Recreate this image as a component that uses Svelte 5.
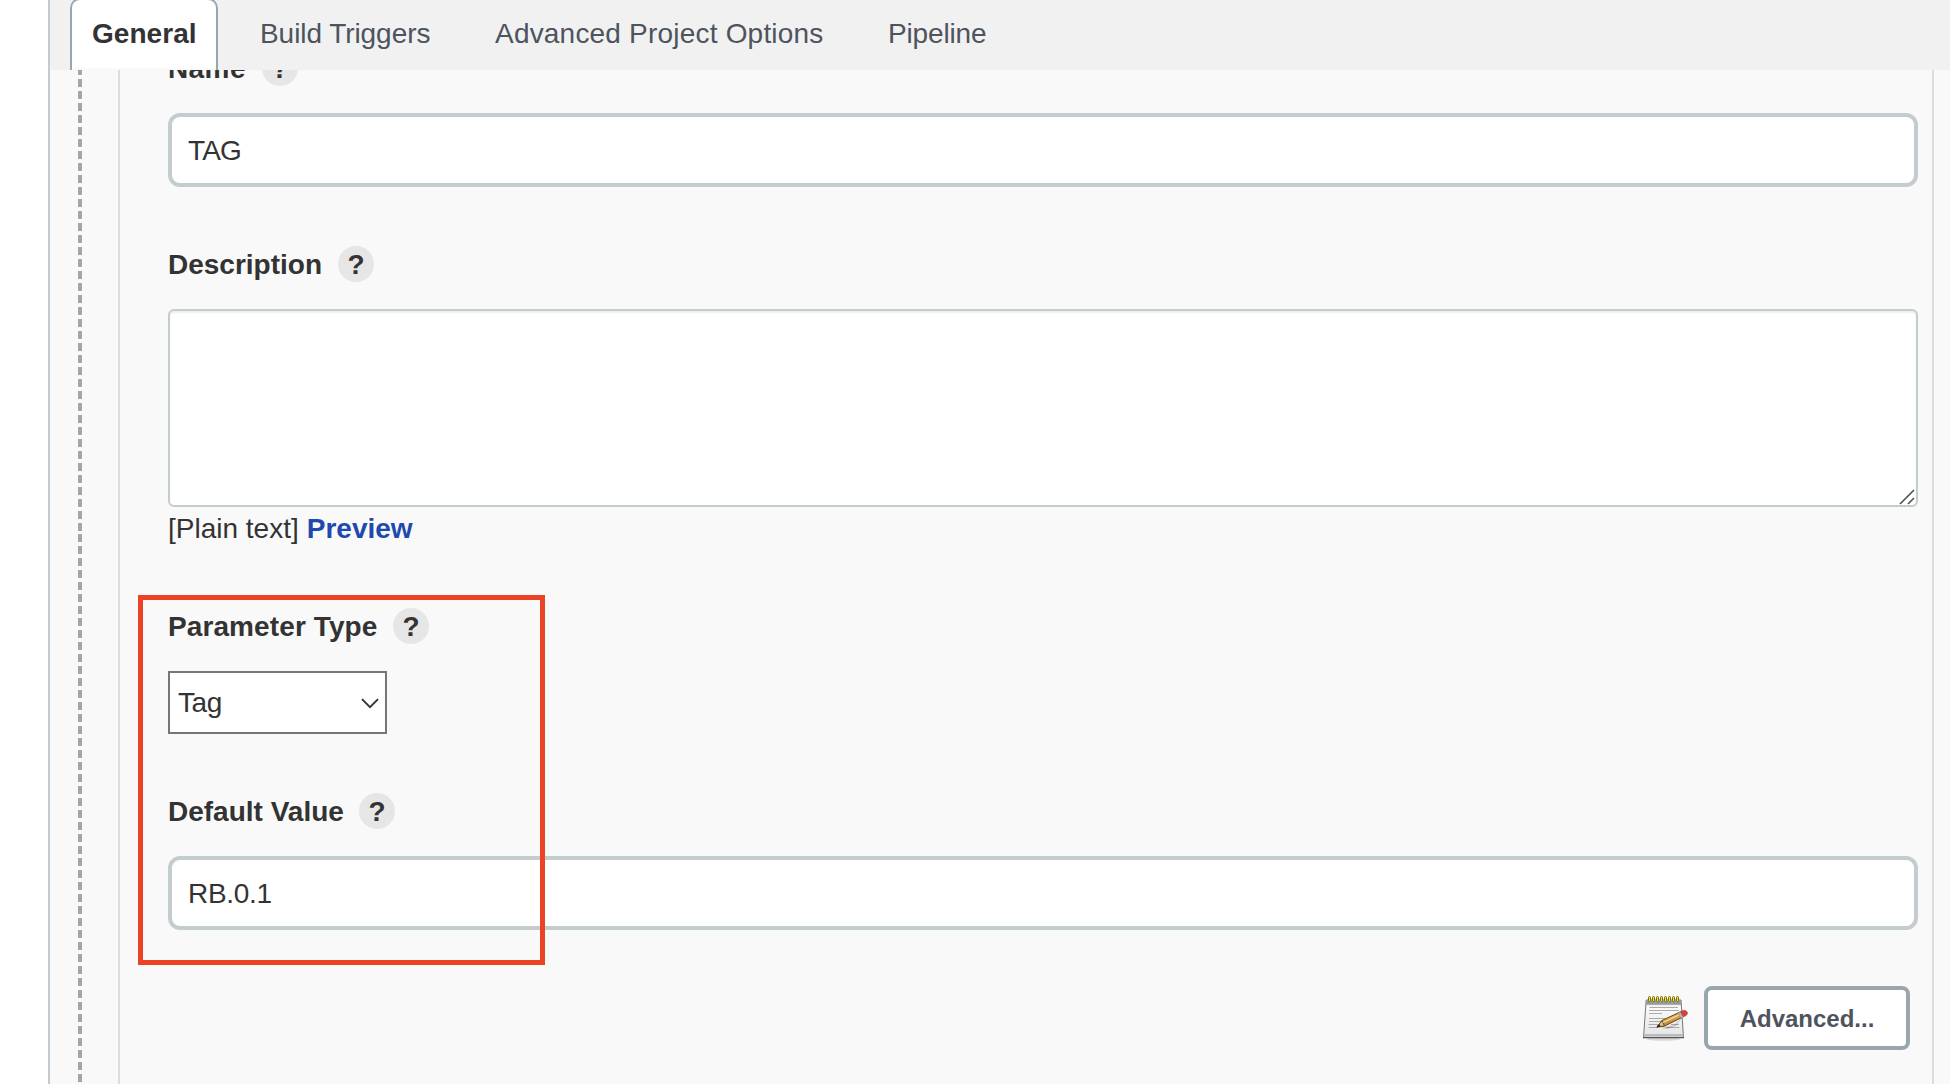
<script>
  const tabs = [
    { label: 'General', active: true, ls: 0.05, w: 148 },
    { label: 'Build Triggers', ls: -0.06, w: 235 },
    { label: 'Advanced Project Options', ls: 0.2, w: 393 },
    { label: 'Pipeline', ls: -0.15, w: 163 }
  ];
  let tag = $state('TAG');
  let description = $state('');
  let value = $state('RB.0.1');
</script>

{#snippet heading(text, ls, w)}
  <div class="heading">
    <span style="letter-spacing: {ls}px; width: {w}px">{text}</span>
    <button class="help" aria-label="Help">?</button>
  </div>
{/snippet}

<div class="page">
  <nav class="tabs">
    {#each tabs as t}
      <div class="tab" class:active={t.active} style="width: {t.w}px">
        <span style="letter-spacing: {t.ls}px">{t.label}</span>
      </div>
    {/each}
  </nav>
  <main>
    <div class="handle"></div>
    <section class="form">
      <div class="name">{@render heading('Name', 0.4, 94)}</div>
      <input class="text tight" bind:value={tag} />

      <div class="desc">{@render heading('Description', 0, 170)}</div>
      <div class="area">
        <textarea bind:value={description}></textarea>
        <svg class="grip" width="16" height="16" viewBox="0 0 16 16"><path d="M1 15 15 1M9 15l6-6" stroke="#555" stroke-width="1.7" fill="none" /></svg>
      </div>
      <div class="format"><span>[Plain text]</span><a href="#preview">Preview</a></div>

      <div class="marked">
        {@render heading('Parameter Type', 0.1, 225)}
        <button class="select">
          <span>Tag</span>
          <svg width="18" height="11" viewBox="0 0 18 11"><path d="M1 1.2 9 9.2l8-8" stroke="#333" stroke-width="1.9" fill="none" /></svg>
        </button>
        <div class="default">{@render heading('Default Value', 0, 191)}</div>
        <input class="text" bind:value={value} />
        <div class="outline"></div>
      </div>

      <div class="actions">
        <svg class="note" width="48" height="48" viewBox="0 0 48 48">
          <defs>
            <linearGradient id="paper" x1="0" y1="0" x2="0" y2="1">
              <stop offset="0" stop-color="#d5d5d5" /><stop offset=".2" stop-color="#fafafa" /><stop offset="1" stop-color="#e4e4e4" />
            </linearGradient>
            <linearGradient id="wood" x1="0" y1="0" x2=".5" y2="1">
              <stop offset="0" stop-color="#f3cf85" /><stop offset="1" stop-color="#b67c28" />
            </linearGradient>
          </defs>
          <ellipse cx="23.5" cy="44" rx="17" ry="1.800" fill="#000" opacity=".13" />
          <path d="M6.2 5H41l2.5 37.500H3.5z" fill="url(#paper)" stroke="#777" />
          <path d="M6.5 5.500H40.700l.4 4.200H6.200z" fill="#999" />
          <path d="M3.900 39H43.200l.2 2.500H3.700z" fill="#bbb" />
          <path d="M3 42.600H44" stroke="#555" stroke-width="1.2" />
          <path d="M9.500 12.500H38M9 15.500H38.500M9 18.500H22M9 23.500H30M9 26.500H25M8.500 29.500H18M8.500 32.500H18M31 29.500H39M26 32.500H39.500" stroke="#aaa" />
          {#each Array(8) as _, i}
            <rect x={8.5 + i * 4} y="1.500" width="2" height="5" rx="1" fill="#f5e34a" stroke="#766800" stroke-width="1" />
          {/each}
          <path d="m20 33 14-3 8-7-6 8-8 3z" fill="#000" opacity=".16" />
          <path d="M17 32 22 25.500 40 17 43 22 24.500 31z" fill="url(#wood)" stroke="#684617" />
          <path d="M17 32 22 25.500 24.500 31z" fill="#e3c28c" stroke="#684617" />
          <path d="m16.500 32.400 2.400-3.400 1.900 2.300z" fill="#222" />
          <path d="m23 27.500 16-7.500" stroke="#ffdc97" stroke-width="1.200" />
          <path d="m38 18 3-1.500 3 5.200-3 1.600z" fill="#b5b5b5" stroke="#888" stroke-width=".5" />
          <path d="m40.500 16.600 2.800-1q3-.6 4 2 .5 2-1.500 3l-2.500 1z" fill="#e83b37" stroke="#963a32" stroke-width=".7" />
        </svg>
        <button class="advanced">Advanced...</button>
      </div>
    </section>
  </main>
</div>

<style>
  :global(body) { margin: 0; overflow: hidden; background: #fff; }
  * { box-sizing: border-box; }
  .page {
    width: 1902px; height: 1084px; margin-left: 48px; overflow: hidden;
    border-left: 2px solid #c3cbd0; background: #f9f9f9; color: #333;
    font: 28px/34px "Liberation Sans", Arial, sans-serif;
    display: flex; flex-direction: column;
  }
  button, input, textarea { font: inherit; color: inherit; margin: 0; }
  .tabs { flex: none; height: 70px; background: #f1f1f1; display: flex; padding-left: 20px; }
  .tab { flex: none; height: 70px; padding: 17px 0 0 42px; color: #4d545d; white-space: nowrap; }
  .tab.active {
    height: 72px; margin-top: -2px; padding: 17px 0 0 20px; color: #333; font-weight: 700;
    background: linear-gradient(#fff, #fff 68px, #f9f9f9 68px); border: 2px solid #98a6ae; border-bottom: 0;
    border-radius: 10px 10px 0 0;
  }
  main { flex: 1; min-height: 0; display: flex; padding-left: 28px; overflow: hidden; }
  .handle {
    flex: none; width: 4px; margin-right: 36px;
    background: repeating-linear-gradient(to bottom, #a6a6a6 0 5px, #f9f9f9 5px 8.99px, #a6a6a6 8.99px 11.987px);
  }
  .form {
    flex: none; width: 1816px; height: 1014px; border: solid #ddd; border-width: 0 2px;
    padding: 0 14px 0 48px; display: flex; flex-direction: column;
  }
  .heading { height: 36px; display: flex; align-items: center; font-weight: 700; white-space: nowrap; }
  .heading span { flex: none; padding-top: 2px; }
  .help {
    width: 36px; height: 36px; padding: 0; border: 0; border-radius: 50%;
    background: #e6e6e6; font-weight: 700; line-height: 38px; text-align: center;
  }
  .name { margin-top: -20px; }
  .text {
    width: 1750px; height: 74px; display: block; border: 4px solid #c3cccf; border-radius: 12px;
    padding: 2px 16px 0; background: #fff; outline: none; letter-spacing: -.3px;
  }
  .tight { letter-spacing: -.9px; }
  .name + .text { margin-top: 27px; }
  .desc { margin-top: 59px; }
  .area { position: relative; margin-top: 27px; height: 198px; }
  textarea {
    width: 1750px; height: 198px; display: block; resize: none; outline: none;
    border: 2px solid #c3cccf; border-radius: 6px; background: #fff; box-shadow: inset 0 2px 2px #eee;
  }
  .grip { position: absolute; right: 3px; bottom: 2px; }
  .format { height: 34px; margin-top: 5px; display: flex; gap: 8px; white-space: nowrap; }
  a { color: #1f4aad; font-weight: 700; text-decoration: none; }
  .marked { position: relative; margin-top: 62px; }
  .select {
    width: 219px; height: 63px; margin-top: 27px; padding: 1px 6px 0 8px; display: flex; align-items: center;
    justify-content: space-between; border: 2px solid #767676; border-radius: 0; background: #fff; letter-spacing: -.4px;
  }
  .default { margin-top: 59px; }
  .default + .text { margin-top: 27px; }
  .outline {
    position: absolute; left: -30.500px; top: -13.500px; width: 407px; height: 370px;
    border: 5px solid #ec4226; pointer-events: none;
  }
  .actions { display: flex; justify-content: flex-end; align-items: flex-start; gap: 16px; margin-top: 56px; padding-right: 8px; }
  .note { margin-top: 9px; }
  .advanced {
    width: 206px; height: 64px; padding: 2px 0 0; border: 4px solid #9aa6ad; border-radius: 8px;
    background: #fff; color: #4d545d; font-size: 24px; font-weight: 700;
  }
</style>
